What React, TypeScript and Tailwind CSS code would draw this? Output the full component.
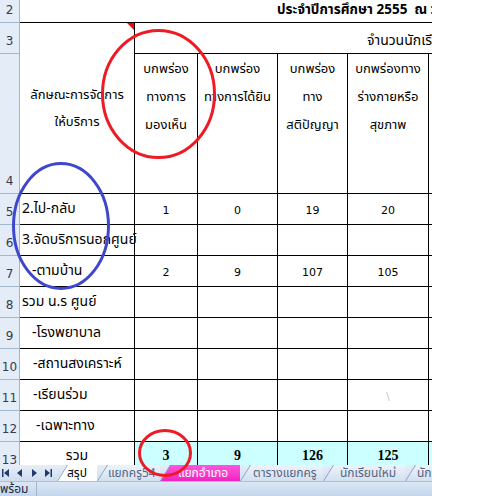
import React from "react";

const thai = "font-['Tahoma','Noto_Sans_Thai','Noto_Sans',sans-serif]";

type Row = { n: number; label: string; pad: string; v: string[] };

const rows: Row[] = [
  { n: 5, label: "2.ไป-กลับ", pad: "pl-[2px]", v: ["1", "0", "19", "20"] },
  { n: 6, label: "3.จัดบริการนอกศูนย์", pad: "pl-[2px]", v: ["", "", "", ""] },
  { n: 7, label: "-ตามบ้าน", pad: "pl-[12px]", v: ["2", "9", "107", "105"] },
  { n: 8, label: "รวม น.ร ศูนย์", pad: "pl-[2px]", v: ["", "", "", ""] },
  { n: 9, label: "-โรงพยาบาล", pad: "pl-[12px]", v: ["", "", "", ""] },
  { n: 10, label: "-สถานสงเคราะห์", pad: "pl-[13px]", v: ["", "", "", ""] },
  { n: 11, label: "-เรียนร่วม", pad: "pl-[13px]", v: ["", "", "", ""] },
  { n: 12, label: "-เฉพาะทาง", pad: "pl-[16px]", v: ["", "", "", ""] },
];

const tabs = [
  { label: "สรุป", w: "w-[40px]", pl: "pl-[10px]", kind: "active" },
  { label: "แยกครู54", w: "w-[63px]", pl: "pl-[11px]", kind: "" },
  { label: "แยกอำเภอ", w: "w-[80px]", pl: "pl-[18px]", kind: "pink" },
  { label: "ตารางแยกครู", w: "w-[83px]", pl: "pl-[13px]", kind: "" },
  { label: "นักเรียนใหม่", w: "w-[82px]", pl: "pl-[17px]", kind: "" },
  { label: "นักเรียนเก่า", w: "w-[80px]", pl: "pl-[12px]", kind: "" },
];

function RowHead({ n }: { n: number }) {
  return (
    <div className="col-start-1 border-r border-b border-[#9eb6ce] bg-[#e4ecf7] flex items-end justify-center pb-[5px] text-[12px] leading-[14px] text-[#333c4e] font-['Tahoma','DejaVu_Sans',sans-serif]">
      {n}
    </div>
  );
}

function Tab({ label, w, pl, kind }: { label: string; w: string; pl: string; kind: string }) {
  const bg =
    kind === "active"
      ? "bg-white text-black"
      : kind === "pink"
        ? "bg-gradient-to-b from-[#ff55dd] to-[#f020c0] text-white"
        : "bg-gradient-to-b from-[#eef3fa] to-[#d3e0f0] text-[#556583]";
  return (
    <div className={`relative shrink-0 h-[16px] ${w}`}>
      <div
        className={`h-full flex items-center text-[12px] leading-none whitespace-nowrap [clip-path:polygon(10px_0,100%_0,100%_100%,0_100%)] ${pl} ${bg}`}
      >
        {label}
      </div>
      <svg className="absolute left-0 top-0" width="11" height="16">
        <line x1="0.5" y1="16" x2="10.5" y2="0" stroke="#8ba5c6" strokeWidth="1" />
      </svg>
    </div>
  );
}

export default function App() {
  return (
    <div className={`relative w-[500px] h-[496px] bg-white overflow-hidden ${thai}`}>
      <div className="w-[432px] h-full flex flex-col overflow-hidden">
        <div className="h-[465px] shrink-0 overflow-hidden">
          <div className="grid grid-cols-[20px_115px_63px_80px_70px_81px_40px] grid-rows-[23px_31px_140px_repeat(9,31px)] text-black">
            {/* row 2 */}
            <RowHead n={2} />
            <div className="col-span-6 border-b border-black pl-[257px] pt-[1px] text-[13.5px] leading-[18px] font-bold whitespace-nowrap overflow-hidden">
              ประจำปีการศึกษา 2555&nbsp; ณ วันที่ 10 มิถุนายน
            </div>

            {/* rows 3-4 */}
            <div className="col-start-1 row-start-2 border-r border-b border-[#9eb6ce] bg-[#e4ecf7] flex items-end justify-center pb-[5px] text-[12px] leading-[14px] text-[#333c4e] font-['Tahoma','DejaVu_Sans',sans-serif]">
              3
            </div>
            <div className="col-start-1 row-start-3 border-r border-b border-[#9eb6ce] bg-[#e4ecf7] flex items-end justify-center pb-[5px] text-[12px] leading-[14px] text-[#333c4e] font-['Tahoma','DejaVu_Sans',sans-serif]">
              4
            </div>
            <div className="relative col-start-2 row-start-2 row-span-2 border-r border-b border-black flex flex-col items-center justify-center pt-[1px] text-[13px] leading-[27px]">
              <span>ลักษณะการจัดการ</span>
              <span>ให้บริการ</span>
              <svg className="absolute right-0 top-0" width="7" height="7">
                <polygon points="0,0 7,0 7,7" fill="#ff0000" />
              </svg>
            </div>
            <div className="col-start-3 col-span-5 row-start-2 border-b border-black pl-[232px] pt-[9px] text-[14px] leading-[18px] whitespace-nowrap overflow-hidden">
              จำนวนนักเรียนพิการ
            </div>
            {[
              ["บกพร่อง", "ทางการ", "มองเห็น"],
              ["บกพร่อง", "ทางการได้ยิน"],
              ["บกพร่อง", "ทาง", "สติปัญญา"],
              ["บกพร่องทาง", "ร่างกายหรือ", "สุขภาพ"],
              [],
            ].map((lines, i) => (
              <div
                key={i}
                className="row-start-3 border-r border-b border-black flex flex-col items-center pt-[1px] text-[13px] leading-[28px] whitespace-nowrap"
              >
                {lines.map((l) => (
                  <span key={l}>{l}</span>
                ))}
              </div>
            ))}

            {/* rows 5-12 */}
            {rows.map((r) => (
              <React.Fragment key={r.n}>
                <RowHead n={r.n} />
                <div className={`border-r border-b border-black flex items-end pb-[5px] text-[14px] leading-[20px] whitespace-nowrap ${r.pad}`}>
                  {r.label}
                </div>
                {[...r.v, ""].map((v, i) => (
                  <div
                    key={i}
                    className="border-r border-b border-black flex items-end justify-center pb-[6px] text-[11px] leading-[14px] font-['Tahoma','DejaVu_Sans',sans-serif]"
                  >
                    {r.n === 11 && i === 3 ? <span className="text-[#c9b9c9] text-[10px]">\</span> : v}
                  </div>
                ))}
              </React.Fragment>
            ))}

            {/* row 13 */}
            <RowHead n={13} />
            <div className="border-r border-b border-black flex items-end justify-center pb-[6px] text-[14px] leading-[20px]">
              รวม
            </div>
            {["3", "9", "126", "125", ""].map((v, i) => (
              <div
                key={i}
                className="border-r border-b border-black bg-[#ccffff] flex items-end justify-center pb-[8px] text-[14px] leading-[16px] font-bold font-['Liberation_Serif',serif]"
              >
                {v}
              </div>
            ))}
          </div>
        </div>

        {/* sheet tabs */}
        <div className="h-[16px] shrink-0 flex items-stretch bg-gradient-to-b from-[#e6eef8] to-[#cfdcee] overflow-hidden">
          <div className="w-[57px] shrink-0 flex items-center gap-[6px] pl-[2px] text-[#1f3b6b]">
            <svg width="8" height="8" viewBox="0 0 8 8">
              <rect x="0" y="0" width="1.5" height="8" fill="currentColor" />
              <polygon points="7,0 7,8 2,4" fill="currentColor" />
            </svg>
            <svg width="8" height="8" viewBox="0 0 8 8">
              <polygon points="6,0 6,8 1,4" fill="currentColor" />
            </svg>
            <svg width="8" height="8" viewBox="0 0 8 8">
              <polygon points="2,0 2,8 7,4" fill="currentColor" />
            </svg>
            <svg width="8" height="8" viewBox="0 0 8 8">
              <polygon points="1,0 1,8 6,4" fill="currentColor" />
              <rect x="6.5" y="0" width="1.5" height="8" fill="currentColor" />
            </svg>
          </div>
          <div className="flex">
            {tabs.map((t) => (
              <Tab key={t.label} {...t} />
            ))}
          </div>
        </div>

        {/* status bar */}
        <div className="h-[15px] shrink-0 flex items-center bg-gradient-to-b from-[#dce7f5] to-[#c3d6ec] border-t border-[#aac0da] text-[12px] leading-[14px] text-[#1b2b45]">
          <div className="w-[37px] border-r border-[#9eb6ce] h-full flex items-center">พร้อม</div>
        </div>
      </div>

      {/* hand-drawn marks over the sheet */}
      <svg className="absolute left-0 top-0 pointer-events-none" width="500" height="496">
        <ellipse cx="158.5" cy="94" rx="56" ry="63.5" fill="none" stroke="#ed1c24" strokeWidth="3" />
        <ellipse cx="61" cy="226" rx="47.5" ry="62.5" fill="none" stroke="#3f48cc" strokeWidth="3" />
        <ellipse cx="165" cy="453" rx="25.5" ry="22.5" fill="none" stroke="#ed1c24" strokeWidth="3" />
      </svg>
    </div>
  );
}
